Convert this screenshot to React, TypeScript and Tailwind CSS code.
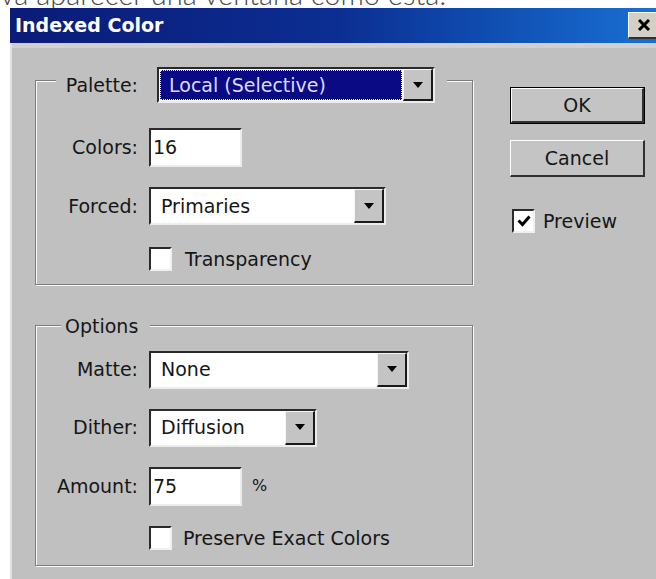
import type { ReactNode } from "react";

const ui = "font-['DejaVu_Sans',sans-serif] text-[19px] text-[#161616]";

function DropArrow() {
  return (
    <div className="flex w-[30px] shrink-0 items-center justify-center border border-r-2 border-b-2 border-t-[#f4f4f4] border-l-[#f4f4f4] border-r-[#1a1a1a] border-b-[#1a1a1a] bg-[#c4c4c4]">
      <svg width="10" height="6" viewBox="0 0 10 6">
        <path d="M0 0h10L5 6z" fill="#000" />
      </svg>
    </div>
  );
}

function Select({ w, h, focused, children }: { w: string; h: string; focused?: boolean; children: ReactNode }) {
  return (
    <div className={`flex border-2 border-t-[#2a2a2a] border-l-[#2a2a2a] border-r-[#ececec] border-b-[#ececec] bg-white ${w} ${h}`}>
      {focused ? (
        <div className="m-[1px] flex flex-1 items-center border border-dotted border-[#f0f0b0] bg-[#0a0a84] pl-[8px] text-[#dcdcff]">
          {children}
        </div>
      ) : (
        <div className="flex flex-1 items-center pl-[10px]">{children}</div>
      )}
      <DropArrow />
    </div>
  );
}

function Field({ value }: { value: string }) {
  return (
    <div className="flex h-[39px] w-[93px] items-center border-2 border-t-[#2a2a2a] border-l-[#2a2a2a] border-r-[#ececec] border-b-[#ececec] bg-white pl-[2px]">
      {value}
    </div>
  );
}

function Check({ checked }: { checked?: boolean }) {
  return (
    <div className="flex h-[24px] w-[23px] shrink-0 items-center justify-center border-2 border-t-[#2a2a2a] border-l-[#2a2a2a] border-r-[#f0f0f0] border-b-[#f0f0f0] bg-white">
      {checked && (
        <svg width="14" height="12" viewBox="0 0 14 12">
          <path d="M1.5 5.5l4 4 7-8" fill="none" stroke="#000" strokeWidth="3" />
        </svg>
      )}
    </div>
  );
}

function Row({ label, children, className = "" }: { label: string; children: ReactNode; className?: string }) {
  return (
    <div className={`flex items-center ${className}`}>
      <span className="w-[113px] pr-[11px] text-right">{label}</span>
      {children}
    </div>
  );
}

function Button({ label, isDefault }: { label: string; isDefault?: boolean }) {
  return (
    <div className={`h-[37px] w-[135px] ${isDefault ? "border border-black" : ""}`}>
      <div className="flex h-full items-center justify-center border border-r-2 border-b-2 border-t-white border-l-white border-r-[#303030] border-b-[#303030] bg-[#c4c4c4]">
        {label}
      </div>
    </div>
  );
}

const group = "border border-[#7c7c7c] shadow-[1px_1px_0_#fafafa,inset_1px_1px_0_#fafafa]";

export default function App() {
  return (
    <div className="flex h-[579px] w-[656px] flex-col overflow-hidden bg-white">
      {/* caption line above the dialog, mostly cropped */}
      <div className="h-[8px] overflow-hidden">
        <div className="-mt-[21px] whitespace-nowrap font-['Lato',sans-serif] text-[29px] font-light leading-[29px] text-[#4a4a4a]">
          va aparecer una ventana como esta:
        </div>
      </div>

      <div className={`ml-[10px] flex w-[658px] shrink-0 flex-1 flex-col ${ui}`}>
        {/* title bar */}
        <div className="flex h-[35px] items-center justify-between bg-linear-to-r from-[#0a1b78] via-[#0c2e92] to-[#1b72d6] pl-[5px] pr-[4px]">
          <span className="font-['DejaVu_Sans',sans-serif] text-[19px] font-bold text-white">Indexed Color</span>
          <div className="mr-[4px] flex h-[27px] w-[32px] items-center justify-center border border-r-2 border-b-2 border-t-white border-l-white border-r-[#303030] border-b-[#303030] bg-[#d4d0c8]">
            <svg width="14" height="12" viewBox="0 0 14 12">
              <path d="M2 1l10 10M12 1L2 11" stroke="#000" strokeWidth="3" />
            </svg>
          </div>
        </div>

        <div className="flex flex-1 flex-col border-l-2 border-[#e2e2e2] bg-[#c0c0c0]">
          <div className="h-[5px] bg-[#d3cfd0]" />
          <div className="flex pl-[23px] pt-[9px]">
            <div className="flex w-[438px] flex-col">
              {/* Palette group */}
              <fieldset className={`${group} pb-[10px]`}>
                <legend className="ml-[20px] flex items-center bg-[#c0c0c0] pl-[4px] pr-[12px] pt-[10px]">
                  <span className="w-[78px] text-right">Palette:</span>
                  <span className="w-[19px]" />
                  <Select w="w-[278px]" h="h-[36px]" focused>
                    Local (Selective)
                  </Select>
                </legend>
                <Row label="Colors:" className="mt-[25px]">
                  <Field value="16" />
                </Row>
                <Row label="Forced:" className="mt-[20px]">
                  <Select w="w-[237px]" h="h-[38px]">
                    Primaries
                  </Select>
                </Row>
                <div className="mt-[20px] flex items-center gap-[13px] pl-[113px]">
                  <Check />
                  <span>Transparency</span>
                </div>
              </fieldset>

              {/* Options group */}
              <fieldset className={`${group} mt-[30px] pb-[13px]`}>
                <legend className="ml-[25px] bg-[#c0c0c0] pl-[4px] pr-[12px] leading-[22px]">Options</legend>
                <Row label="Matte:" className="mt-[14px]">
                  <Select w="w-[260px]" h="h-[38px]">
                    None
                  </Select>
                </Row>
                <Row label="Dither:" className="mt-[20px]">
                  <Select w="w-[168px]" h="h-[38px]">
                    Diffusion
                  </Select>
                </Row>
                <Row label="Amount:" className="mt-[20px]">
                  <Field value="75" />
                  <span className="ml-[10px] text-[16px]">%</span>
                </Row>
                <div className="mt-[18px] flex items-center gap-[11px] pl-[113px]">
                  <Check />
                  <span>Preserve Exact Colors</span>
                </div>
              </fieldset>
            </div>

            {/* buttons */}
            <div className="ml-[37px] mt-[30px] flex flex-col">
              <Button label="OK" isDefault />
              <div className="mt-[16px]">
                <Button label="Cancel" />
              </div>
              <div className="ml-[2px] mt-[30px] flex items-center gap-[8px]">
                <Check checked />
                <span>Preview</span>
              </div>
            </div>
          </div>
        </div>
      </div>
    </div>
  );
}
